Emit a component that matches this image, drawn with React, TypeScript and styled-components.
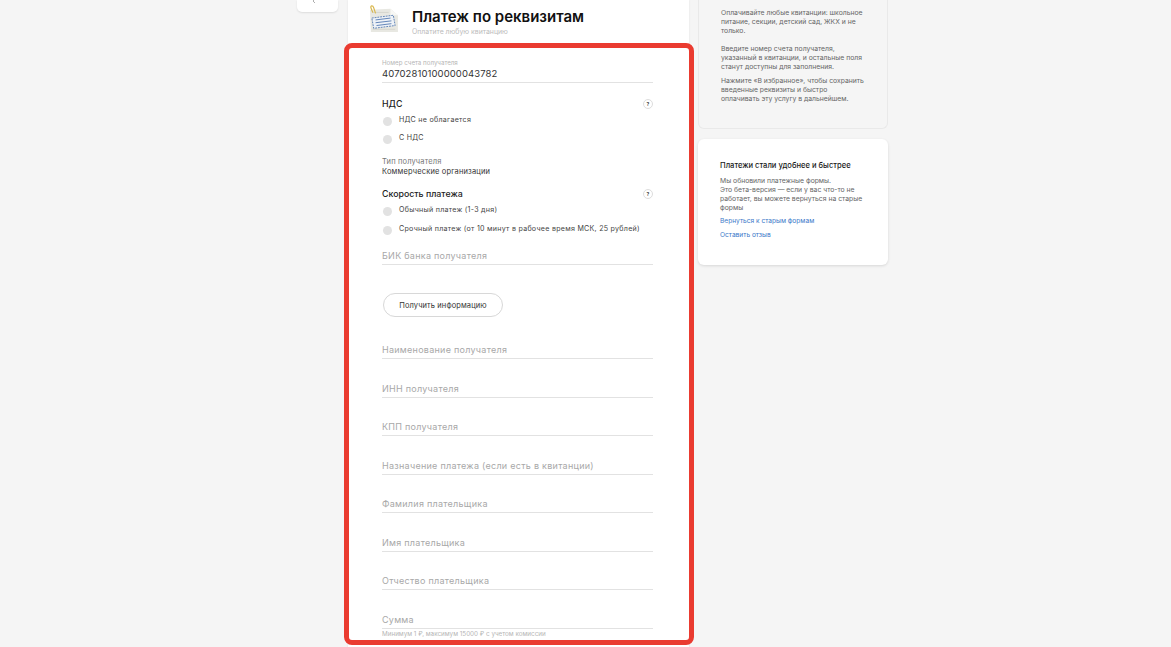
import React from "react";
import styled, { createGlobalStyle } from "styled-components";

const GlobalStyle = createGlobalStyle`
  html, body {
    margin: 0;
    height: 100%;
    overflow: hidden;
    background: #f5f5f5;
    font-family: "Inter", "Noto Sans", sans-serif;
    color: #222;
  }
`;

const Page = styled.div`
  display: flex;
  align-items: flex-start;
  height: 647px;
  overflow: hidden;
  padding-left: 297px;
`;

const BackButton = styled.div`
  display: flex;
  align-items: flex-end;
  justify-content: center;
  box-sizing: border-box;
  width: 41px;
  height: 12px;
  margin-right: 10px;
  padding: 0 6px 8px 0;
  background: #fff;
  border-radius: 0 0 5px 5px;
  box-shadow: 0 1px 2px rgba(0, 0, 0, 0.1);
`;

const MainCard = styled.main`
  width: 341px;
  height: 660px;
  background: #fff;
  margin-right: 9px;
  box-shadow: 0 0 2px rgba(0, 0, 0, 0.08);
`;

const Header = styled.header`
  display: flex;
  align-items: flex-start;
  height: 43px;
  box-sizing: border-box;
  padding: 5px 0 0 20px;
`;

const HeaderText = styled.div`
  margin-left: 13px;
  padding-top: 3px;
`;

const Title = styled.h1`
  margin: 0;
  font-size: 15px;
  line-height: 17px;
  font-weight: 600;
  color: #111;
`;

const Subtitle = styled.div`
  font-size: 6.9px;
  line-height: 9px;
  margin-top: 2px;
  color: #bbb;
`;

const FormBox = styled.section`
  box-sizing: border-box;
  width: 350px;
  height: 602px;
  margin-left: -4px;
  padding: 11px 0 0 33px;
  border: 5px solid #ea3b30;
  border-radius: 8px;
  overflow: hidden;
`;

const FilledField = styled.div`
  box-sizing: border-box;
  width: 271px;
  height: 24px;
  border-bottom: 1px solid #e2e2e2;
`;

const FieldLabel = styled.div`
  font-size: 6.2px;
  line-height: 8px;
  color: #b5b5b5;
`;

const FieldValue = styled.div`
  font-size: 9.5px;
  line-height: 14px;
  letter-spacing: 0.1px;
  color: #333;
`;

const GroupHead = styled.div<{ $top: number }>`
  display: flex;
  align-items: center;
  justify-content: space-between;
  width: 271px;
  height: 12px;
  margin-top: ${(p) => p.$top}px;
`;

const GroupTitle = styled.div`
  font-size: 8.8px;
  line-height: 12px;
  font-weight: 500;
  color: #222;
`;

const HelpBadge = styled.div`
  display: flex;
  align-items: center;
  justify-content: center;
  box-sizing: border-box;
  width: 10px;
  height: 10px;
  border: 1px solid #ddd;
  border-radius: 50%;
  font-size: 5px;
  font-weight: 700;
  color: #333;
`;

const RadioRow = styled.div<{ $gap: number }>`
  display: flex;
  align-items: center;
  height: 12px;
  margin-top: ${(p) => p.$gap}px;
`;

const RadioDot = styled.span`
  flex: none;
  width: 9px;
  height: 9px;
  margin: 2px 7px 0 1px;
  border-radius: 50%;
  background: #e2e2e2;
`;

const RadioLabel = styled.span`
  font-size: 7.1px;
  line-height: 10px;
  letter-spacing: 0.27px;
  white-space: nowrap;
  color: #444;
`;

const InfoBlock = styled.div`
  margin-top: 13px;
`;

const InfoLabel = styled.div`
  font-size: 7.5px;
  line-height: 10px;
  letter-spacing: 0.15px;
  color: #777;
`;

const InfoValue = styled.div`
  font-size: 7.5px;
  line-height: 10px;
  letter-spacing: 0.15px;
  color: #333;
`;

const EmptyField = styled.div<{ $top: number }>`
  box-sizing: border-box;
  display: flex;
  align-items: center;
  width: 271px;
  height: 16px;
  margin-top: ${(p) => p.$top}px;
  padding-bottom: 2px;
  border-bottom: 1px solid #e2e2e2;
  font-size: 9px;
  letter-spacing: 0.27px;
  color: #a8a8a8;
`;

const OutlineButton = styled.button`
  display: block;
  box-sizing: border-box;
  width: 120px;
  height: 24px;
  margin: 28px 0 0 1px;
  padding: 0;
  background: #fff;
  border: 1px solid #d8d8d8;
  border-radius: 12px;
  font-family: inherit;
  font-size: 7.5px;
  letter-spacing: 0.1px;
  color: #333;
`;

const Hint = styled.div`
  margin-top: 1px;
  font-size: 6.3px;
  line-height: 8px;
  color: #b5b5b5;
`;

const SideColumn = styled.aside`
  display: flex;
  flex-direction: column;
  gap: 10px;
  width: 190px;
`;

const GreyCard = styled.div`
  box-sizing: border-box;
  height: 129px;
  padding: 8px 23px 0 22px;
  border: 1px solid #e9e9e9;
  border-top: none;
  border-radius: 0 0 6px 6px;
`;

const WhiteCard = styled.div`
  box-sizing: border-box;
  height: 126px;
  padding: 22px 23px 0 22px;
  background: #fff;
  border-radius: 6px;
  box-shadow: 0 1px 3px rgba(0, 0, 0, 0.12);
`;

const SideText = styled.p<{ $after?: number }>`
  margin: 0 0 ${(p) => p.$after ?? 0}px;
  font-size: 6.8px;
  line-height: 9px;
  color: #666;
`;

const SideTitle = styled.div`
  font-size: 7.6px;
  line-height: 10px;
  font-weight: 500;
  color: #1a1a1a;
  margin-bottom: 5px;
`;

const SideLink = styled.a`
  display: block;
  margin-top: 5px;
  font-size: 6.6px;
  line-height: 9px;
  color: #3a78c9;
`;

const Receipt: React.FC = () => (
  <svg width="31" height="28" viewBox="0 0 33 30">
    <path d="M2 5 L24 4 L32 11 L32 29 L3 29 Z" fill="#e8e8e2" />
    <path d="M24 4 L24 11 L32 11 Z" fill="#f8f8f5" />
    <path d="M4 8 H22 M5 26 H29" stroke="#d4d4ce" strokeWidth="1" />
    <path d="M4 14 L27 11 L29 22 L6 25 Z" fill="#eef2f7" stroke="#5a7fb5" strokeWidth="1" strokeDasharray="2 1" />
    <path d="M8 16 L24 14 M8 19 L25 17 M9 22 L25 20" stroke="#5a7fb5" strokeWidth="1" />
    <path d="M5 8 L3 3 Q2.5 1 4 1 Q5.500 1 6 3 L8 9" fill="none" stroke="#d9b64a" strokeWidth="1.200" />
  </svg>
);

const paymentFields = [
  "Наименование получателя",
  "ИНН получателя",
  "КПП получателя",
  "Назначение платежа (если есть в квитанции)",
  "Фамилия плательщика",
  "Имя плательщика",
  "Отчество плательщика",
  "Сумма",
];

export default function App() {
  return (
    <Page>
      <GlobalStyle />
      <BackButton>
        <svg width="5" height="6" viewBox="0 0 5 6">
          <path d="M4 0 L1 3 L3 5" fill="none" stroke="#999" strokeWidth="0.800" />
        </svg>
      </BackButton>
      <MainCard>
        <Header>
          <Receipt />
          <HeaderText>
            <Title>Платеж по реквизитам</Title>
            <Subtitle>Оплатите любую квитанцию</Subtitle>
          </HeaderText>
        </Header>
        <FormBox>
          <FilledField>
            <FieldLabel>Номер счета получателя</FieldLabel>
            <FieldValue>40702810100000043782</FieldValue>
          </FilledField>
          <GroupHead $top={15}>
            <GroupTitle>НДС</GroupTitle>
            <HelpBadge>?</HelpBadge>
          </GroupHead>
          <RadioRow $gap={4}>
            <RadioDot />
            <RadioLabel>НДС не облагается</RadioLabel>
          </RadioRow>
          <RadioRow $gap={6}>
            <RadioDot />
            <RadioLabel>С НДС</RadioLabel>
          </RadioRow>
          <InfoBlock>
            <InfoLabel>Тип получателя</InfoLabel>
            <InfoValue>Коммерческие организации</InfoValue>
          </InfoBlock>
          <GroupHead $top={11}>
            <GroupTitle>Скорость платежа</GroupTitle>
            <HelpBadge>?</HelpBadge>
          </GroupHead>
          <RadioRow $gap={4}>
            <RadioDot />
            <RadioLabel>Обычный платеж (1-3 дня)</RadioLabel>
          </RadioRow>
          <RadioRow $gap={7}>
            <RadioDot />
            <RadioLabel>Срочный платеж (от 10 минут в рабочее время МСК, 25 рублей)</RadioLabel>
          </RadioRow>
          <EmptyField $top={14}>БИК банка получателя</EmptyField>
          <OutlineButton>Получить информацию</OutlineButton>
          {paymentFields.map((name, index) => (
            <EmptyField key={name} $top={index === 0 ? 26 : 22.57}>
              {name}
            </EmptyField>
          ))}
          <Hint>Минимум 1 ₽, максимум 15000 ₽ с учетом комиссии</Hint>
        </FormBox>
      </MainCard>
      <SideColumn>
        <GreyCard>
          <SideText $after={9}>
            Оплачивайте любые квитанции: школьное питание, секции, детский сад, ЖКХ и не только.
          </SideText>
          <SideText $after={5}>
            Введите номер счета получателя, указанный в квитанции, и остальные поля станут доступны для заполнения.
          </SideText>
          <SideText>
            Нажмите «В избранное», чтобы сохранить введенные реквизиты и быстро оплачивать эту услугу в дальнейшем.
          </SideText>
        </GreyCard>
        <WhiteCard>
          <SideTitle>Платежи стали удобнее и быстрее</SideTitle>
          <SideText>
            Мы обновили платежные формы.
            <br />
            Это бета-версия — если у вас что-то не работает, вы можете вернуться на старые формы
          </SideText>
          <SideLink>Вернуться к старым формам</SideLink>
          <SideLink>Оставить отзыв</SideLink>
        </WhiteCard>
      </SideColumn>
    </Page>
  );
}
